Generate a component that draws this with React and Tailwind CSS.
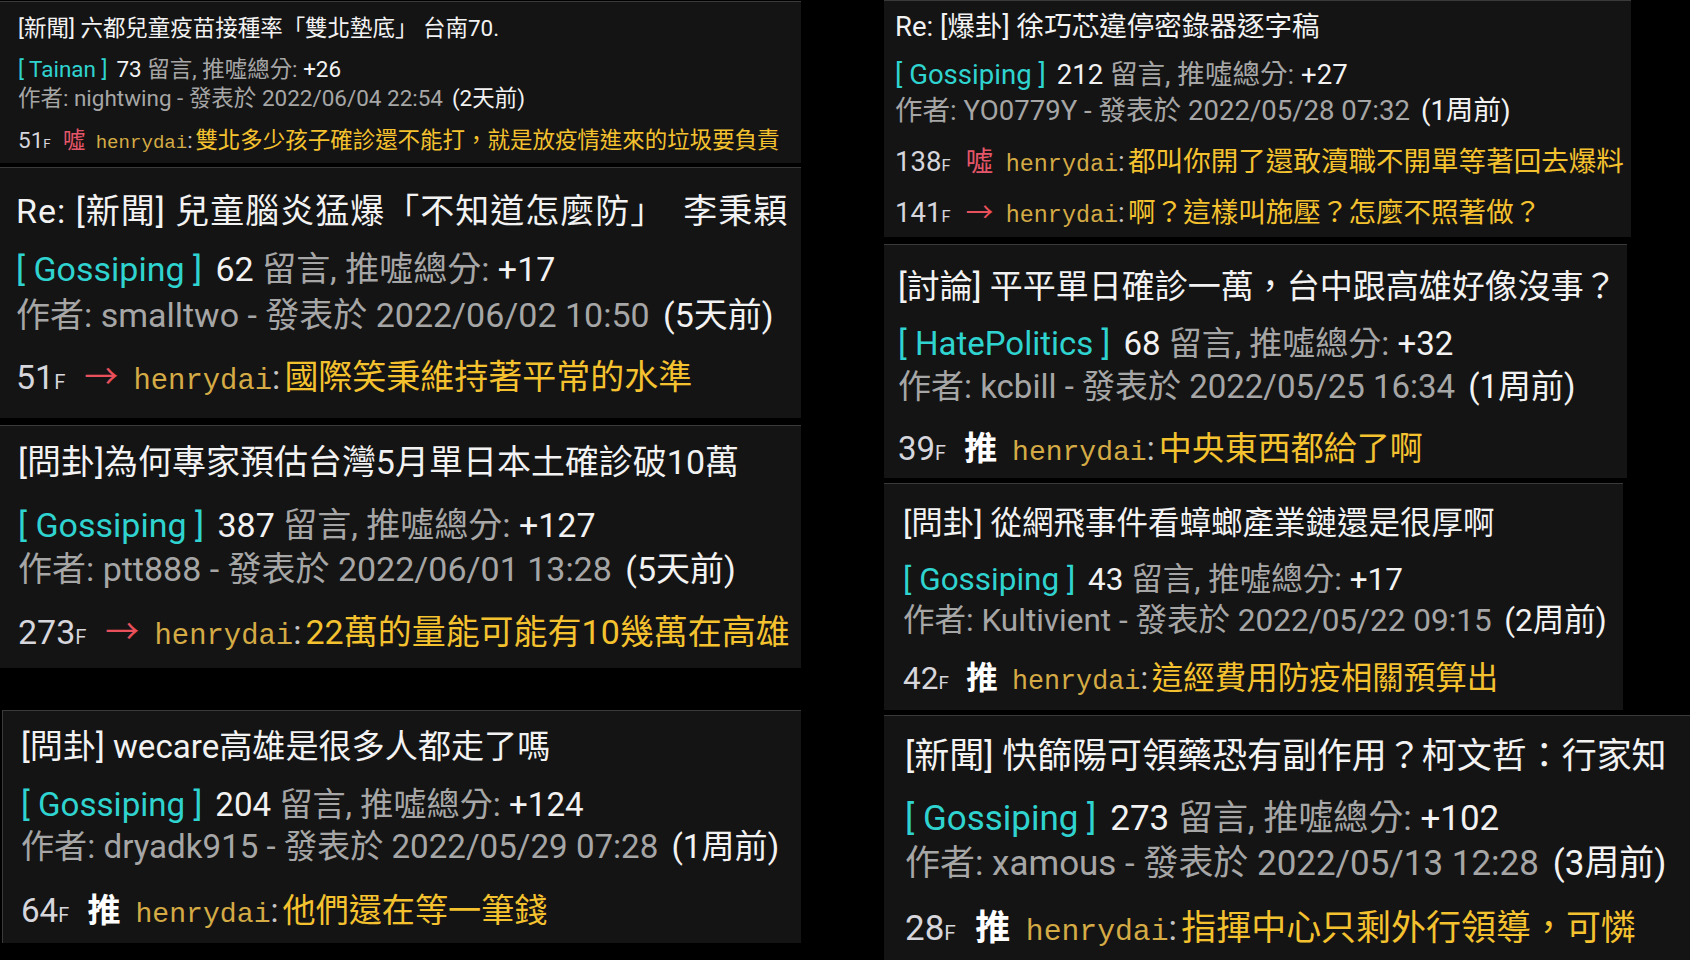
const tagColor = {
  '→': 'text-[#e8505b]',
  '噓': 'text-[#e5566a]',
  '推': 'text-white font-bold',
};

// size: base size that drives spacing; grow: how much the glyphs are scaled over it
const leftCards = [
  {
    box: 'mt-px h-[162px]',
    size: 'text-[21px]',
    grow: 'text-[1.07em]',
    lead: 'leading-[1.32em]',
    pad: 'pt-[13px] pl-[18px]',
    titleMb: 'mb-[0.6em]',
    firstMt: 'mt-[0.61em]',
    title: '[新聞] 六都兒童疫苗接種率「雙北墊底」 台南70.',
    board: 'Tainan',
    count: '73',
    score: '+26',
    author: 'nightwing',
    date: '2022/06/04 22:54',
    ago: '2天前',
    comments: [{ floor: '51', tag: '噓', text: '雙北多少孩子確診還不能打，就是放疫情進來的垃圾要負責' }],
  },
  {
    box: 'mt-[4px] h-[251px]',
    size: 'text-[33px]',
    grow: 'text-[1.03em]',
    pad: 'pt-[21px] pl-[16px]',
    titleX: 'tracking-[0.03em]',
    titleMb: 'mb-[0.4em]',
    firstMt: 'mt-[0.53em]',
    title: 'Re: [新聞] 兒童腦炎猛爆「不知道怎麼防」　李秉穎',
    board: 'Gossiping',
    count: '62',
    score: '+17',
    author: 'smalltwo',
    date: '2022/06/02 10:50',
    ago: '5天前',
    comments: [{ floor: '51', tag: '→', text: '國際笑秉維持著平常的水準' }],
  },
  {
    box: 'mt-[7px] h-[243px]',
    size: 'text-[33px]',
    grow: 'text-[1.03em]',
    lead: 'leading-[1.3em]',
    pad: 'pt-[15px] pl-[18px]',
    titleMb: 'mb-[0.57em]',
    firstMt: 'mt-[0.6em]',
    title: '[問卦]為何專家預估台灣5月單日本土確診破10萬',
    board: 'Gossiping',
    count: '387',
    score: '+127',
    author: 'ptt888',
    date: '2022/06/01 13:28',
    ago: '5天前',
    comments: [{ floor: '273', tag: '→', text: '22萬的量能可能有10幾萬在高雄' }],
  },
  {
    box: 'mt-[42px] ml-[2px] h-[233px] border-l',
    size: 'text-[32px]',
    grow: 'text-[1.035em]',
    lead: 'leading-[1.3em]',
    pad: 'pt-[15px] pl-[18px]',
    titleMb: 'mb-[0.47em]',
    firstMt: 'mt-[0.66em]',
    title: '[問卦] wecare高雄是很多人都走了嗎',
    board: 'Gossiping',
    count: '204',
    score: '+124',
    author: 'dryadk915',
    date: '2022/05/29 07:28',
    ago: '1周前',
    comments: [{ floor: '64', tag: '推', text: '他們還在等一筆錢' }],
  },
];

const rightCards = [
  {
    box: 'w-[747px] h-[237px]',
    size: 'text-[26px]',
    grow: 'text-[1.06em]',
    pad: 'pt-[8px] pl-[11px]',
    titleMb: 'mb-[0.42em]',
    firstMt: 'mt-[0.56em]',
    nextMt: 'mt-[0.42em]',
    title: 'Re: [爆卦] 徐巧芯違停密錄器逐字稿',
    board: 'Gossiping',
    count: '212',
    score: '+27',
    author: 'YO0779Y',
    date: '2022/05/28 07:32',
    ago: '1周前',
    comments: [
      { floor: '138', tag: '噓', text: '都叫你開了還敢瀆職不開單等著回去爆料' },
      { floor: '141', tag: '→', text: '啊？這樣叫施壓？怎麼不照著做？' },
    ],
  },
  {
    box: 'mt-[7px] w-[743px] h-[234px]',
    size: 'text-[31px]',
    grow: 'text-[1.065em]',
    pad: 'pt-[21px] pl-[14px]',
    titleMb: 'mb-[0.43em]',
    firstMt: 'mt-[0.6em]',
    title: '[討論] 平平單日確診一萬，台中跟高雄好像沒事？',
    board: 'HatePolitics',
    count: '68',
    score: '+32',
    author: 'kcbill',
    date: '2022/05/25 16:34',
    ago: '1周前',
    comments: [{ floor: '39', tag: '推', text: '中央東西都給了啊' }],
  },
  {
    box: 'mt-[5px] w-[739px] h-[227px]',
    size: 'text-[30px]',
    grow: 'text-[1.05em]',
    pad: 'pt-[19px] pl-[19px]',
    title: '[問卦] 從網飛事件看蟑螂產業鏈還是很厚啊',
    board: 'Gossiping',
    count: '43',
    score: '+17',
    author: 'Kultivient',
    date: '2022/05/22 09:15',
    ago: '2周前',
    comments: [{ floor: '42', tag: '推', text: '這經費用防疫相關預算出' }],
  },
  {
    box: 'mt-[5px] w-full flex-1',
    size: 'text-[33px]',
    grow: 'text-[1.06em]',
    pad: 'pt-[18px] pl-[21px]',
    firstMt: 'mt-[0.6em]',
    title: '[新聞] 快篩陽可領藥恐有副作用？柯文哲：行家知',
    board: 'Gossiping',
    count: '273',
    score: '+102',
    author: 'xamous',
    date: '2022/05/13 12:28',
    ago: '3周前',
    comments: [{ floor: '28', tag: '推', text: '指揮中心只剩外行領導，可憐' }],
  },
];

function Comment({ c, mt, grow }) {
  return (
    <div className={`whitespace-nowrap ${mt}`}>
      <span className={grow}>
        <span className="text-[#d6d6dc]">{c.floor}</span>
        <span className="text-[0.6em] text-[#d6d6dc]">F</span>
        <span className={`ml-[0.55em] mr-[0.45em] ${tagColor[c.tag]}`}>{c.tag}</span>
        <span className="font-['Liberation_Mono',monospace] text-[0.85em] text-[#d4ab45]">henrydai</span>
        <span className="text-[#c4c4c4]">:</span>
        <span className="ml-[0.12em] text-[#f4c22f]">{c.text}</span>
      </span>
    </div>
  );
}

function Card({ card }) {
  return (
    <div className={`${card.box} ${card.size} bg-[#141414] border-t border-[#3a3a3a] overflow-hidden`}>
      <div className={`${card.pad} ${card.lead || 'leading-[1.37em]'}`}>
        <div className={`${card.titleMb || 'mb-[0.5em]'} text-[#f2f2f2] whitespace-nowrap`}>
          <span className={`${card.grow} ${card.titleX || ''}`}>{card.title}</span>
        </div>
        <div className="whitespace-nowrap">
          <span className={card.grow}>
            <span className="text-[#2fd3cf]">[ {card.board} ]</span>
            <span className="ml-[0.15em] text-[#f2f2f2]"> {card.count}</span>
            <span className="text-[#a6a6a6]"> 留言, 推噓總分: </span>
            <span className="text-[#f2f2f2]">{card.score}</span>
          </span>
        </div>
        <div className="whitespace-nowrap">
          <span className={card.grow}>
            <span className="text-[#a6a6a6]">作者: {card.author} - 發表於 {card.date}</span>
            <span className="ml-[0.15em] text-[#f2f2f2]"> ({card.ago})</span>
          </span>
        </div>
        {card.comments.map((c, i) => (
          <Comment
            key={i}
            c={c}
            grow={card.grow}
            mt={i === 0 ? card.firstMt || 'mt-[0.56em]' : card.nextMt || 'mt-[0.5em]'}
          />
        ))}
      </div>
    </div>
  );
}

export default function App() {
  return (
    <div className="w-[1690px] h-[960px] bg-black flex gap-[83px] overflow-hidden font-[Roboto,'Noto_Sans_CJK_TC',sans-serif]">
      <div className="w-[801px] flex flex-col">
        {leftCards.map((card, i) => (
          <Card key={i} card={card} />
        ))}
      </div>
      <div className="flex-1 flex flex-col">
        {rightCards.map((card, i) => (
          <Card key={i} card={card} />
        ))}
      </div>
    </div>
  );
}
